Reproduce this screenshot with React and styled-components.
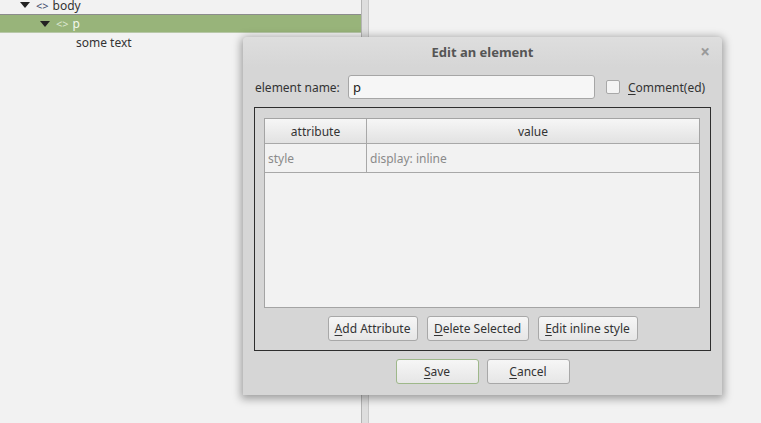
import React from "react";
import styled, { createGlobalStyle } from "styled-components";

const Global = createGlobalStyle`
  html, body { margin: 0; padding: 0; }
  body {
    width: 761px; height: 423px; overflow: hidden;
    font-family: "Noto Sans", "Open Sans", sans-serif;
    font-size: 12px; color: #333;
    background: #f2f2f2;
  }
`;

const Page = styled.div`
  position: relative;
  display: flex;
  width: 761px;
  height: 423px;
  background: #f2f2f2;
`;

const TreePanel = styled.div`
  width: 361px;
  flex: none;
  display: flex;
  flex-direction: column;
  margin-top: -4px;
`;

const TreeRow = styled.div`
  display: flex;
  align-items: center;
  padding-left: ${(p) => p.$indent}px;
  box-sizing: border-box;
  background: ${(p) => (p.$selected ? "#98b47a" : "transparent")};
  border-top: 1px solid ${(p) => (p.$selected ? "#8c8c8c" : "transparent")};
  border-bottom: 1px solid ${(p) => (p.$selected ? "#b8c8a8" : "transparent")};
  color: ${(p) => (p.$selected ? "#f4f8ee" : "#333")};
  height: ${(p) => (p.$selected ? 19 : 18)}px;
`;

const Arrow = styled.span`
  width: 0; height: 0;
  border-left: 5px solid transparent;
  border-right: 5px solid transparent;
  border-top: 6px solid #222;
  margin-right: 6px;
`;

const Tag = styled.span`
  font-size: 11px;
  color: ${(p) => (p.$selected ? "#dde8d0" : "#3d4b6b")};
  margin-right: 4px;
`;

const Splitter = styled.div`
  width: 6px;
  flex: none;
  background: #dedede;
  border-left: 1px solid #b4b4b4;
  border-right: 1px solid #c8c8c8;
`;

const RightPanel = styled.div`
  flex: 1;
  background: #f2f2f2;
`;

const Dialog = styled.div`
  position: absolute;
  left: 243px;
  top: 37px;
  width: 479px;
  height: 358px;
  box-sizing: border-box;
  background: #d6d6d6;
  border-radius: 4px 4px 0 0;
  box-shadow: 0 2px 8px 2px rgba(0,0,0,0.35);
  display: flex;
  flex-direction: column;
`;

const TitleBar = styled.div`
  height: 30px;
  flex: none;
  position: relative;
  display: flex;
  align-items: center;
  justify-content: center;
  background: linear-gradient(#dedede, #d6d6d6);
  border-radius: 4px 4px 0 0;
  font-weight: bold;
  font-size: 13px;
  color: #555;
`;

const Close = styled.span`
  position: absolute;
  right: 12px;
  top: 3px;
  font-size: 17px;
  font-weight: bold;
  color: #9a9a9a;
`;

const Body = styled.div`
  flex: 1;
  display: flex;
  flex-direction: column;
  padding: 8px 11px 11px;
  gap: 8px;
`;

const NameRow = styled.div`
  display: flex;
  align-items: center;
  height: 24px;
`;

const Label = styled.label`
  margin-left: 1px;
  width: 93px;
  flex: none;
`;

const Input = styled.div`
  width: 247px;
  height: 24px;
  box-sizing: border-box;
  border: 1px solid #a6a6a6;
  border-radius: 3px;
  background: #f6f6f6;
  display: flex;
  align-items: center;
  padding-left: 4px;
  font-size: 13px;
  color: #222;
`;

const Check = styled.span`
  width: 14px;
  height: 14px;
  box-sizing: border-box;
  border: 1px solid #a8a8a8;
  border-radius: 2px;
  background: #f4f4f4;
  margin-left: 11px;
  margin-right: 8px;
`;

const U = styled.u`
  text-decoration: underline;
  text-underline-offset: 2px;
`;

const Frame = styled.div`
  flex: none;
  height: 244px;
  box-sizing: border-box;
  border: 1px solid #2e2e2e;
  padding: 10px 10px 9px 9px;
  display: flex;
  flex-direction: column;
  gap: 8px;
`;

const Table = styled.div`
  flex: 1;
  background: #f2f2f2;
  border: 1px solid #a4a4a4;
  display: flex;
  flex-direction: column;
`;

const Row = styled.div`
  display: grid;
  grid-template-columns: 101px 1fr;
  height: ${(p) => p.$h}px;
  border-bottom: 1px solid #a8a8a8;
  box-sizing: border-box;
  background: ${(p) => (p.$head ? "linear-gradient(#f6f6f6, #e2e2e2)" : "transparent")};
`;

const Cell = styled.div`
  display: flex;
  align-items: center;
  justify-content: ${(p) => (p.$head ? "center" : "flex-start")};
  padding-left: ${(p) => (p.$head ? 0 : 3)}px;
  color: ${(p) => (p.$head ? "#333" : "#8a8a8a")};
  border-left: ${(p) => (p.$first ? "none" : "1px solid #a8a8a8")};
`;

const ButtonRow = styled.div`
  display: flex;
  justify-content: center;
  gap: ${(p) => p.$gap}px;
  padding-left: ${(p) => p.$shift || 0}px;
`;

const Button = styled.div`
  width: ${(p) => p.$w}px;
  height: 25px;
  box-sizing: border-box;
  border: 1px solid ${(p) => (p.$default ? "#9eb88a" : "#a8a8a8")};
  border-radius: 3px;
  background: linear-gradient(#f6f6f6, #e6e6e6);
  display: flex;
  align-items: center;
  justify-content: center;
  color: #333;
`;

export default function App() {
  return (
    <>
      <Global />
      <Page>
        <TreePanel>
          <TreeRow $indent={20}><Arrow /><Tag>&lt;&gt;</Tag>body</TreeRow>
          <TreeRow $indent={40} $selected><Arrow /><Tag $selected>&lt;&gt;</Tag>p</TreeRow>
          <TreeRow $indent={76}>some text</TreeRow>
        </TreePanel>
        <Splitter />
        <RightPanel />
        <Dialog>
          <TitleBar>
            Edit an element
            <Close>×</Close>
          </TitleBar>
          <Body>
            <NameRow>
              <Label>element name:</Label>
              <Input>p</Input>
              <Check />
              <span><U>C</U>omment(ed)</span>
            </NameRow>
            <Frame>
              <Table>
                <Row $head $h={25}>
                  <Cell $head $first>attribute</Cell>
                  <Cell $head>value</Cell>
                </Row>
                <Row $h={29}>
                  <Cell $first>style</Cell>
                  <Cell>display: inline</Cell>
                </Row>
              </Table>
              <ButtonRow $gap={9} $shift={1}>
                <Button $w={90}><span><U>A</U>dd Attribute</span></Button>
                <Button $w={102}><span><U>D</U>elete Selected</span></Button>
                <Button $w={100}><span><U>E</U>dit inline style</span></Button>
              </ButtonRow>
            </Frame>
            <ButtonRow $gap={8} $shift={0}>
              <Button $w={83} $default><span><U>S</U>ave</span></Button>
              <Button $w={83}><span><U>C</U>ancel</span></Button>
            </ButtonRow>
          </Body>
        </Dialog>
      </Page>
    </>
  );
}
